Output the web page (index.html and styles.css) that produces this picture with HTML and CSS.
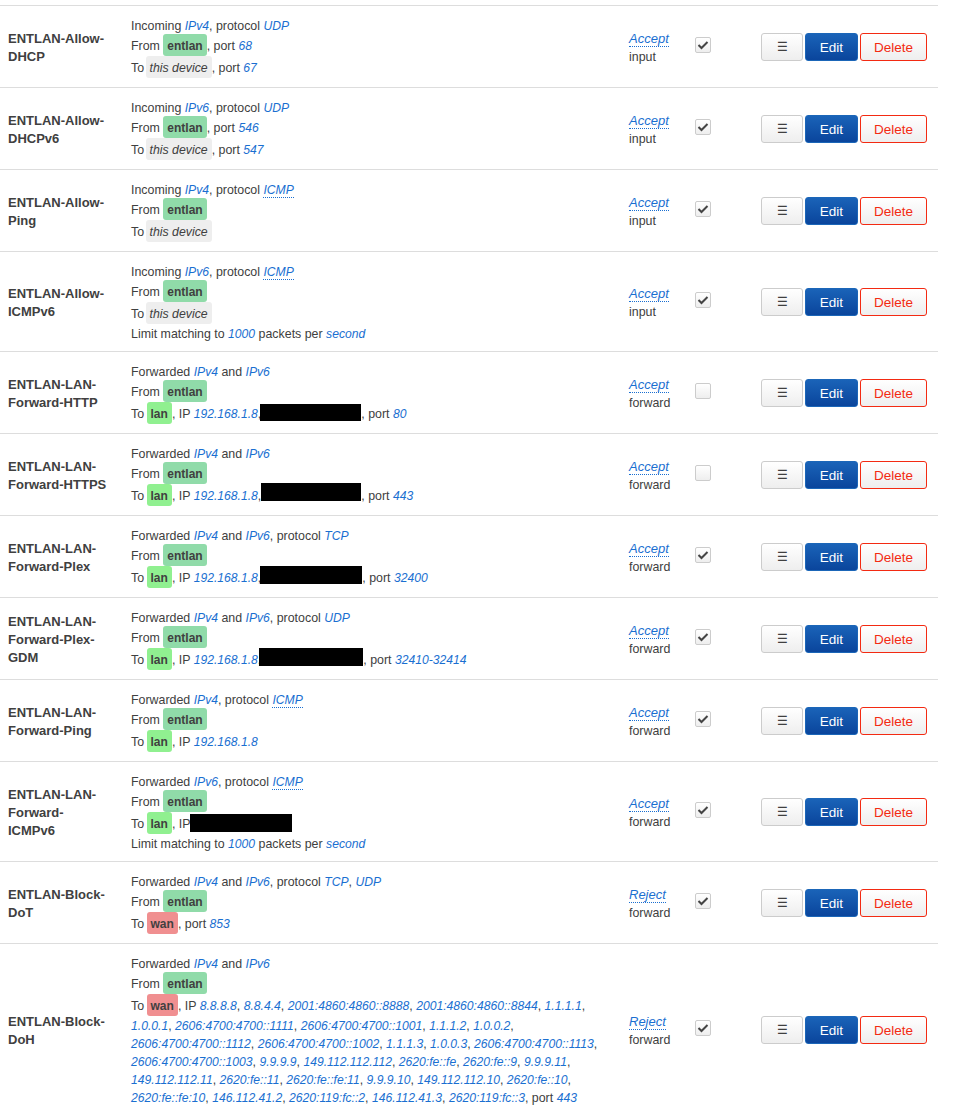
FILE: index.html
```html
<!DOCTYPE html>
<html lang="en">
<head>
<meta charset="utf-8">
<title>Traffic rules</title>
<link rel="stylesheet" href="styles.css">
</head>
<body>
<table class="rules">
<colgroup><col class="c-name"><col class="c-desc"><col class="c-act"><col class="c-en"><col class="c-btn"></colgroup>
<tbody>
<tr>
<td class="name">ENTLAN-Allow-DHCP</td>
<td class="desc">Incoming <i>IPv4</i>, protocol <i>UDP</i><br>From <span class="zone z-ent">entlan</span>, port <i>68</i><br>To <span class="zone z-dev">this device</span>, port <i>67</i></td>
<td class="act"><i class="abbr">Accept</i><br>input</td>
<td class="en"><span class="cb on"><svg viewBox="0 0 12 10"><path d="M1.5 5 4.5 8 10.5 2"/></svg></span></td>
<td class="btns"><div class="btn-row"><button class="btn menu">☰</button><button class="btn edit">Edit</button><button class="btn del">Delete</button></div></td>
</tr>
<tr>
<td class="name">ENTLAN-Allow-DHCPv6</td>
<td class="desc">Incoming <i>IPv6</i>, protocol <i>UDP</i><br>From <span class="zone z-ent">entlan</span>, port <i>546</i><br>To <span class="zone z-dev">this device</span>, port <i>547</i></td>
<td class="act"><i class="abbr">Accept</i><br>input</td>
<td class="en"><span class="cb on"><svg viewBox="0 0 12 10"><path d="M1.5 5 4.5 8 10.5 2"/></svg></span></td>
<td class="btns"><div class="btn-row"><button class="btn menu">☰</button><button class="btn edit">Edit</button><button class="btn del">Delete</button></div></td>
</tr>
<tr>
<td class="name">ENTLAN-Allow-Ping</td>
<td class="desc">Incoming <i>IPv4</i>, protocol <i class="abbr">ICMP</i><br>From <span class="zone z-ent">entlan</span><br>To <span class="zone z-dev">this device</span></td>
<td class="act"><i class="abbr">Accept</i><br>input</td>
<td class="en"><span class="cb on"><svg viewBox="0 0 12 10"><path d="M1.5 5 4.5 8 10.5 2"/></svg></span></td>
<td class="btns"><div class="btn-row"><button class="btn menu">☰</button><button class="btn edit">Edit</button><button class="btn del">Delete</button></div></td>
</tr>
<tr>
<td class="name">ENTLAN-Allow-ICMPv6</td>
<td class="desc">Incoming <i>IPv6</i>, protocol <i class="abbr">ICMP</i><br>From <span class="zone z-ent">entlan</span><br>To <span class="zone z-dev">this device</span><br>Limit matching to <i>1000</i> packets per <i>second</i></td>
<td class="act"><i class="abbr">Accept</i><br>input</td>
<td class="en"><span class="cb on"><svg viewBox="0 0 12 10"><path d="M1.5 5 4.5 8 10.5 2"/></svg></span></td>
<td class="btns"><div class="btn-row"><button class="btn menu">☰</button><button class="btn edit">Edit</button><button class="btn del">Delete</button></div></td>
</tr>
<tr>
<td class="name">ENTLAN-LAN-Forward-HTTP</td>
<td class="desc">Forwarded <i>IPv4</i> and <i>IPv6</i><br>From <span class="zone z-ent">entlan</span><br>To <span class="zone z-lan">lan</span>, IP <i>192.168.1.8</i>,<span class="redact r-1"></span>, port <i>80</i></td>
<td class="act"><i class="abbr">Accept</i><br>forward</td>
<td class="en"><span class="cb"></span></td>
<td class="btns"><div class="btn-row"><button class="btn menu">☰</button><button class="btn edit">Edit</button><button class="btn del">Delete</button></div></td>
</tr>
<tr>
<td class="name">ENTLAN-LAN-Forward-HTTPS</td>
<td class="desc">Forwarded <i>IPv4</i> and <i>IPv6</i><br>From <span class="zone z-ent">entlan</span><br>To <span class="zone z-lan">lan</span>, IP <i>192.168.1.8</i>,<span class="redact r-2"></span>, port <i>443</i></td>
<td class="act"><i class="abbr">Accept</i><br>forward</td>
<td class="en"><span class="cb"></span></td>
<td class="btns"><div class="btn-row"><button class="btn menu">☰</button><button class="btn edit">Edit</button><button class="btn del">Delete</button></div></td>
</tr>
<tr>
<td class="name">ENTLAN-LAN-Forward-Plex</td>
<td class="desc">Forwarded <i>IPv4</i> and <i>IPv6</i>, protocol <i>TCP</i><br>From <span class="zone z-ent">entlan</span><br>To <span class="zone z-lan">lan</span>, IP <i>192.168.1.8</i>,<span class="redact r-3"></span>, port <i>32400</i></td>
<td class="act"><i class="abbr">Accept</i><br>forward</td>
<td class="en"><span class="cb on"><svg viewBox="0 0 12 10"><path d="M1.5 5 4.5 8 10.5 2"/></svg></span></td>
<td class="btns"><div class="btn-row"><button class="btn menu">☰</button><button class="btn edit">Edit</button><button class="btn del">Delete</button></div></td>
</tr>
<tr>
<td class="name">ENTLAN-LAN-Forward-Plex-GDM</td>
<td class="desc">Forwarded <i>IPv4</i> and <i>IPv6</i>, protocol <i>UDP</i><br>From <span class="zone z-ent">entlan</span><br>To <span class="zone z-lan">lan</span>, IP <i>192.168.1.8</i>,<span class="redact r-4"></span>, port <i>32410-32414</i></td>
<td class="act"><i class="abbr">Accept</i><br>forward</td>
<td class="en"><span class="cb on"><svg viewBox="0 0 12 10"><path d="M1.5 5 4.5 8 10.5 2"/></svg></span></td>
<td class="btns"><div class="btn-row"><button class="btn menu">☰</button><button class="btn edit">Edit</button><button class="btn del">Delete</button></div></td>
</tr>
<tr>
<td class="name">ENTLAN-LAN-Forward-Ping</td>
<td class="desc">Forwarded <i>IPv4</i>, protocol <i class="abbr">ICMP</i><br>From <span class="zone z-ent">entlan</span><br>To <span class="zone z-lan">lan</span>, IP <i>192.168.1.8</i></td>
<td class="act"><i class="abbr">Accept</i><br>forward</td>
<td class="en"><span class="cb on"><svg viewBox="0 0 12 10"><path d="M1.5 5 4.5 8 10.5 2"/></svg></span></td>
<td class="btns"><div class="btn-row"><button class="btn menu">☰</button><button class="btn edit">Edit</button><button class="btn del">Delete</button></div></td>
</tr>
<tr>
<td class="name">ENTLAN-LAN-Forward-ICMPv6</td>
<td class="desc">Forwarded <i>IPv6</i>, protocol <i class="abbr">ICMP</i><br>From <span class="zone z-ent">entlan</span><br>To <span class="zone z-lan">lan</span>, IP<span class="redact r-5"></span><br>Limit matching to <i>1000</i> packets per <i>second</i></td>
<td class="act"><i class="abbr">Accept</i><br>forward</td>
<td class="en"><span class="cb on"><svg viewBox="0 0 12 10"><path d="M1.5 5 4.5 8 10.5 2"/></svg></span></td>
<td class="btns"><div class="btn-row"><button class="btn menu">☰</button><button class="btn edit">Edit</button><button class="btn del">Delete</button></div></td>
</tr>
<tr>
<td class="name">ENTLAN-Block-DoT</td>
<td class="desc">Forwarded <i>IPv4</i> and <i>IPv6</i>, protocol <i>TCP</i>, <i>UDP</i><br>From <span class="zone z-ent">entlan</span><br>To <span class="zone z-wan">wan</span>, port <i>853</i></td>
<td class="act"><i class="abbr">Reject</i><br>forward</td>
<td class="en"><span class="cb on"><svg viewBox="0 0 12 10"><path d="M1.5 5 4.5 8 10.5 2"/></svg></span></td>
<td class="btns"><div class="btn-row"><button class="btn menu">☰</button><button class="btn edit">Edit</button><button class="btn del">Delete</button></div></td>
</tr>
<tr>
<td class="name">ENTLAN-Block-DoH</td>
<td class="desc">Forwarded <i>IPv4</i> and <i>IPv6</i><br>From <span class="zone z-ent">entlan</span><br>To <span class="zone z-wan">wan</span>, IP <i>8.8.8.8</i>, <i>8.8.4.4</i>, <i>2001:4860:4860::8888</i>, <i>2001:4860:4860::8844</i>, <i>1.1.1.1</i>, <i>1.0.0.1</i>, <i>2606:4700:4700::1111</i>, <i>2606:4700:4700::1001</i>, <i>1.1.1.2</i>, <i>1.0.0.2</i>, <i>2606:4700:4700::1112</i>, <i>2606:4700:4700::1002</i>, <i>1.1.1.3</i>, <i>1.0.0.3</i>, <i>2606:4700:4700::1113</i>, <i>2606:4700:4700::1003</i>, <i>9.9.9.9</i>, <i>149.112.112.112</i>, <i>2620:fe::fe</i>, <i>2620:fe::9</i>, <i>9.9.9.11</i>, <i>149.112.112.11</i>, <i>2620:fe::11</i>, <i>2620:fe::fe:11</i>, <i>9.9.9.10</i>, <i>149.112.112.10</i>, <i>2620:fe::10</i>, <i>2620:fe::fe:10</i>, <i>146.112.41.2</i>, <i>2620:119:fc::2</i>, <i>146.112.41.3</i>, <i>2620:119:fc::3</i>, port <i>443</i></td>
<td class="act"><i class="abbr">Reject</i><br>forward</td>
<td class="en"><span class="cb on"><svg viewBox="0 0 12 10"><path d="M1.5 5 4.5 8 10.5 2"/></svg></span></td>
<td class="btns"><div class="btn-row"><button class="btn menu">☰</button><button class="btn edit">Edit</button><button class="btn del">Delete</button></div></td>
</tr>
</tbody>
</table>
</body>
</html>
```

FILE: styles.css
```css
html, body { margin: 0; padding: 0; background: #fff; }
body {
  padding-top: 5px;
  font-family: "Liberation Sans", Arial, sans-serif;
  font-size: 12.4px;
  line-height: 18px;
  color: #404040;
}
.rules { width: 938px; table-layout: fixed; border-collapse: separate; border-spacing: 0; }
.c-name { width: 123px; }
.c-desc { width: 498px; }
.c-act { width: 66px; }
.c-en { width: 66px; }
.c-btn { width: 185px; }
td { border-top: 1px solid #ddd; padding: 11px 8px 8px; vertical-align: middle; }
td.en, td.btns { padding: 10px 8px 9px; }
i { color: #1a6fd1; font-style: italic; font-size: 12.15px; }
.abbr { border-bottom: 1px dotted #1a6fd1; }
.act .abbr { font-size: 13px; }
td.name { font-size: 13px; font-weight: bold; padding-right: 14px; }
.zone {
  display: inline-block;
  margin: -1px 0 1px;
  padding: 2px 4px 0;
  line-height: 20px;
  border-radius: 3px;
  font-size: 12px;
  font-weight: bold;
}
.z-ent { background: #90dba9; }
.z-lan { background: #90f090; margin-left: -1px; }
.z-wan { background: #f08f90; margin-left: -1px; }
.z-dev { background: #eee; font-weight: normal; font-style: italic; font-size: 12.3px; margin-left: -2px; }
.redact { display: inline-block; height: 18px; background: #000; vertical-align: top; }
.r-1 { width: 101px; height: 17px; margin: 1px 0 0 -1px; }
.r-2 { width: 100px; margin: -2px 0 0 0; }
.r-3 { width: 102px; margin: -1px 0 0 -1px; }
.r-4 { width: 104px; margin: -1px 0 0 -2px; }
.r-5 { width: 102px; margin: 1px 0 0 0; }
.cb {
  display: block;
  box-sizing: border-box;
  width: 16px;
  height: 16px;
  margin-bottom: 4px;
  border: 1px solid #ccc;
  border-radius: 2px;
  background: linear-gradient(#fff, #eee);
}
.cb svg { display: block; width: 12px; height: 10px; margin: 2px auto 0; fill: none; stroke: #444; stroke-width: 2; }
.btn-row { display: flex; gap: 2px; }
.btn {
  box-sizing: border-box;
  height: 28px;
  padding: 1px 0 0;
  border-radius: 3px;
  font-family: inherit;
  font-size: 13.5px;
  line-height: 25px;
}
.menu { width: 42px; border: 1px solid #ccc; background: linear-gradient(#fff, #eee); color: #404040; font-size: 12px; }
.edit { width: 53px; border: 1px solid #1b66b8; background: linear-gradient(#1a63b8, #0a459c); color: #fff; }
.del { width: 67px; border: 1px solid #f32a12; background: linear-gradient(#fff, #eee); color: #f32a12; }
```
